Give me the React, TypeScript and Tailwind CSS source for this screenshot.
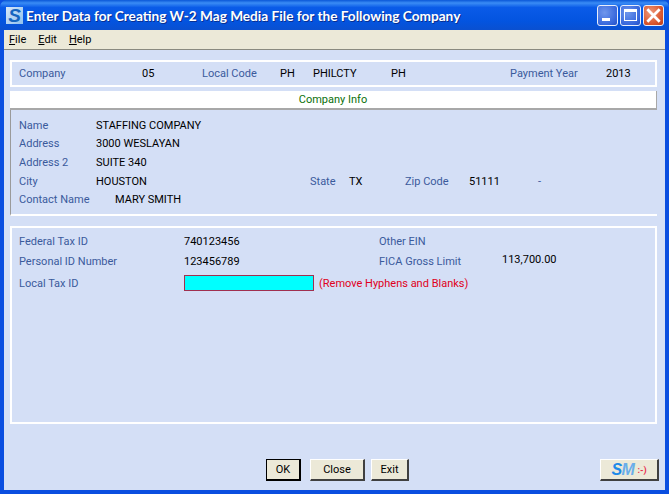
const labelClass = "text-[#3a5a9c]";

function Cell({ w, label, children }: { w: string; label?: boolean; children?: React.ReactNode }) {
  return <span className={`${w} shrink-0 whitespace-nowrap ${label ? labelClass : "text-black"}`}>{children}</span>;
}

function WinButton({ kind }: { kind: "min" | "max" | "close" }) {
  const bg =
    kind === "close"
      ? "bg-[radial-gradient(circle_at_35%_35%,#ee9a7c,#d9552c_65%,#b83c18)]"
      : "bg-[radial-gradient(circle_at_35%_35%,#6f96ec,#3767dc_70%,#2450c4)]";
  return (
    <div className={`w-[21px] h-[21px] rounded-[3px] border border-[#e8eefc] flex items-center justify-center ${bg}`}>
      {kind === "min" && <div className="w-[8px] h-[3px] bg-white mt-[9px] mr-[3px]" />}
      {kind === "max" && <div className="w-[13px] h-[12px] border border-white border-t-[3px]" />}
      {kind === "close" && (
        <svg viewBox="0 0 13 13" className="w-[15px] h-[15px]">
          <path d="M2 2l9 9M11 2l-9 9" stroke="#fff" strokeWidth="2.4" strokeLinecap="square" fill="none" />
        </svg>
      )}
    </div>
  );
}

function Btn({ w, children, active }: { w: string; children: React.ReactNode; active?: boolean }) {
  return (
    <button
      type="button"
      className={`${w} h-[22px] shrink-0 bg-[#ece9d8] text-black flex items-center justify-center border ${
        active ? "border-black border-b-2 border-r-2" : "border-t-white border-l-white border-r-2 border-b-2 border-r-[#404040] border-b-[#404040]"
      }`}
    >
      {children}
    </button>
  );
}

export default function App() {
  return (
    <div className="w-[669px] h-[494px] overflow-hidden flex flex-col bg-[#0a4ee0] text-[11px] leading-[16px] font-['Roboto',sans-serif]">
      {/* title bar */}
      <div className="h-[30px] shrink-0 flex items-center pl-[6px] pr-[5px] rounded-t-[7px] bg-[linear-gradient(to_bottom,#0a57d8_0%,#3a8cf5_10%,#0a5be8_25%,#0354e0_70%,#0a50d0_100%)]">
        <div className="w-[17px] h-[17px] mt-[1px] bg-[linear-gradient(135deg,#d8e8f8,#8fc0ee)] flex items-center justify-center text-[#1565c0] text-[19px] font-bold italic font-['Liberation_Sans',sans-serif]">
          S
        </div>
        <span className="ml-[3px] mt-[2px] text-white text-[13.65px] font-bold whitespace-nowrap font-['Lato',sans-serif] [text-shadow:1px_1px_0_#0a2f90]">
          Enter Data for Creating W-2 Mag Media File for the Following Company
        </span>
        <div className="ml-auto flex gap-[2px]">
          <WinButton kind="min" />
          <WinButton kind="max" />
          <WinButton kind="close" />
        </div>
      </div>

      <div className="flex-1 mx-[4px] mb-[4px] flex flex-col min-h-0">
        {/* menu */}
        <div className="h-[20px] shrink-0 bg-[#ece9d8] border-b border-[#8a8a80] flex items-center gap-[12px] pl-[5px] text-black">
          <span><u>F</u>ile</span>
          <span><u>E</u>dit</span>
          <span><u>H</u>elp</span>
        </div>

        <div className="flex-1 bg-[#d4dff6] flex flex-col pt-[10px] pl-[6px] pr-[8px] min-h-0">
          {/* header strip */}
          <div className="h-[27px] shrink-0 border-2 border-white flex items-center pl-[7px]">
            <Cell w="w-[123px]" label>Company</Cell>
            <Cell w="w-[60px]">05</Cell>
            <Cell w="w-[78px]" label>Local Code</Cell>
            <Cell w="w-[33px]">PH</Cell>
            <Cell w="w-[78px]">PHILCTY</Cell>
            <Cell w="w-[119px]">PH</Cell>
            <Cell w="w-[96px]" label>Payment Year</Cell>
            <Cell w="w-[40px]">2013</Cell>
          </div>

          <div className="h-[19px] shrink-0 mt-[4px] bg-white border-b-2 border-r border-[#a8a8a8] flex items-center justify-center text-[#0a700a]">
            Company Info
          </div>

          {/* company info */}
          <div className="h-[106px] shrink-0 border-l border-[#9a9a9a] border-b-2 border-b-white flex flex-col pl-[8px] pt-[8px]">
            <div className="h-[18px] flex"><Cell w="w-[77px]" label>Name</Cell><Cell w="w-[200px]">STAFFING COMPANY</Cell></div>
            <div className="h-[19px] flex"><Cell w="w-[77px]" label>Address</Cell><Cell w="w-[200px]">3000 WESLAYAN</Cell></div>
            <div className="h-[19px] flex"><Cell w="w-[77px]" label>Address 2</Cell><Cell w="w-[200px]">SUITE 340</Cell></div>
            <div className="h-[18px] flex">
              <Cell w="w-[77px]" label>City</Cell>
              <Cell w="w-[214px]">HOUSTON</Cell>
              <Cell w="w-[39px]" label>State</Cell>
              <Cell w="w-[56px]">TX</Cell>
              <Cell w="w-[64px]" label>Zip Code</Cell>
              <Cell w="w-[69px]">51111</Cell>
              <Cell w="w-[10px]" label>-</Cell>
            </div>
            <div className="h-[18px] flex"><Cell w="w-[96px]" label>Contact Name</Cell><Cell w="w-[200px]">MARY SMITH</Cell></div>
          </div>

          {/* tax ids */}
          <div className="h-[198px] shrink-0 mt-[10px] border-2 border-white flex flex-col pl-[7px] pt-[6px]">
            <div className="h-[20px] flex">
              <Cell w="w-[165px]" label>Federal Tax ID</Cell>
              <Cell w="w-[195px]">740123456</Cell>
              <Cell w="w-[100px]" label>Other EIN</Cell>
            </div>
            <div className="h-[22px] flex">
              <Cell w="w-[165px]" label>Personal ID Number</Cell>
              <Cell w="w-[195px]">123456789</Cell>
              <Cell w="w-[123px]" label>FICA Gross Limit</Cell>
              <span className="-mt-[2px] text-black whitespace-nowrap">113,700.00</span>
            </div>
            <div className="h-[20px] flex items-start">
              <Cell w="w-[165px]" label>Local Tax ID</Cell>
              <div className="w-[130px] h-[16px] -mt-[1px] shrink-0 bg-[#00ffff] border border-[#a03050]" />
              <span className="ml-[5px] text-[#e00020] whitespace-nowrap">(Remove Hyphens and Blanks)</span>
            </div>
          </div>

          {/* buttons */}
          <div className="mt-[35px] -mr-[3px] flex pl-[256px]">
            <Btn w="w-[35px]" active>OK</Btn>
            <div className="w-[9px]" />
            <Btn w="w-[55px]">Close</Btn>
            <div className="w-[6px]" />
            <Btn w="w-[38px]">Exit</Btn>
            <div className="ml-[191px]">
              <Btn w="w-[59px]">
                <span className="flex items-center gap-[3px]">
                  <span className="text-[16px] font-bold italic font-['Liberation_Sans',sans-serif] tracking-[-0.5px]">
                    <span className="text-[#1e8ae8]">S</span>
                    <span className="text-[#6aaeea]">M</span>
                  </span>
                  <span className="text-[#e83050] text-[9px] font-bold">:-)</span>
                </span>
              </Btn>
            </div>
          </div>
        </div>
      </div>
    </div>
  );
}
